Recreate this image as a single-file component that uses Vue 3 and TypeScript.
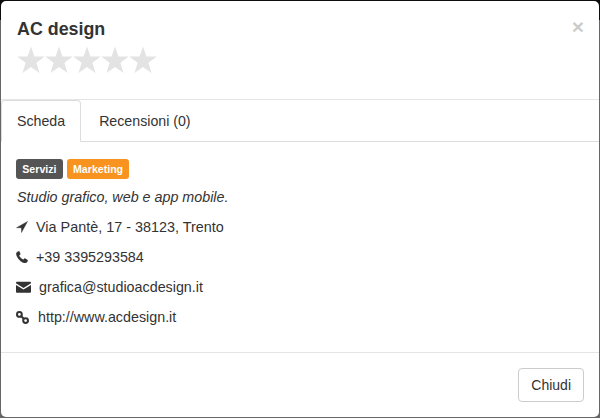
<script setup lang="ts">
const stars: number[] = [1, 2, 3, 4, 5]
</script>

<template>
  <div class="modal-content">
    <div class="modal-header">
      <span class="close">×</span>
      <h4 class="modal-title">AC design</h4>
      <div class="stars">
        <svg v-for="s in stars" :key="s" class="star" viewBox="0 0 28 28" width="28" height="28">
          <path d="M14 .6l3.400 9.900h10.400l-8.400 6.300 3.100 10.300L14 20.900l-8.500 6.200 3.100-10.300L.2 10.500h10.400z" />
        </svg>
      </div>
    </div>

    <ul class="tabs">
      <li class="tab active">Scheda</li>
      <li class="tab">Recensioni (0)</li>
    </ul>

    <div class="modal-body">
      <div class="labels">
        <span class="label dark">Servizi</span>
        <span class="label orange">Marketing</span>
      </div>
      <p class="desc">Studio grafico, web e app mobile.</p>
      <div class="row">
        <svg class="icon solid" viewBox="0 0 12 12" width="12" height="12">
          <path d="M11.500.5L.5 6.700l4.900.1.100 4.700z" />
        </svg>
        <span class="gap-a addr">Via Pantè, 17 - 38123, Trento</span>
      </div>
      <div class="row">
        <svg class="icon solid" viewBox="0 0 12 12" width="12" height="12">
          <path d="M2.600.3L.8 1.500C.2 2 .1 3 .5 4.100c.7 2.100 2 3.800 3.500 5.300 1.600 1.400 3.300 2.500 4.900 2.500.9 0 1.700-.3 2.100-.9l.7-1.300c.1-.3 0-.5-.2-.7L9 7.600c-.3-.1-.5-.1-.7.1l-1 1.100c-.9-.3-1.800-1-2.600-1.800C3.900 6.200 3.300 5.300 3 4.500l1.100-1c.2-.2.200-.4.100-.7L3.300.5C3.100.2 2.900.1 2.600.3z" />
        </svg>
        <span class="gap-a">+39 3395293584</span>
      </div>
      <div class="row">
        <svg class="icon wide" viewBox="0 0 15 12" width="15" height="12">
          <path d="M1.200.7h12.600c.7 0 1.200.5 1.200 1.100v.5L7.500 7 0 2.300v-.5C0 1.200.5.700 1.200.7z" />
          <path d="M0 3.900l7.500 4.700L15 3.900v6.800c0 .6-.5 1.100-1.200 1.100H1.200C.5 11.800 0 11.300 0 10.700z" />
        </svg>
        <span class="gap-b">grafica@studioacdesign.it</span>
      </div>
      <div class="row">
        <svg class="icon link" viewBox="0 0 13 13" width="13" height="13">
          <circle cx="3.400" cy="3.400" r="2.400" />
          <circle cx="9.600" cy="9.600" r="2.400" />
          <path d="M4.800 4.800l3.400 3.400" />
        </svg>
        <span class="gap-c">http://www.acdesign.it</span>
      </div>
    </div>

    <div class="modal-footer">
      <button class="btn" type="button">Chiudi</button>
    </div>
  </div>
</template>

<style>
html,
body {
  margin: 0;
  height: 100%;
  background: linear-gradient(#0c0c0c 20px, #666 20px);
}
</style>

<style scoped>
.modal-content {
  box-sizing: border-box;
  width: 600px;
  height: 418px;
  display: flex;
  flex-direction: column;
  background: #fff;
  background-clip: padding-box;
  border: 1px solid transparent;
  border-radius: 6px;
  font-family: "Liberation Sans", Arial, sans-serif;
  font-size: 14.3px;
  line-height: 20px;
  color: #333;
  overflow: hidden;
}

.modal-header {
  position: relative;
  height: 99px;
  box-sizing: border-box;
  padding: 15px 15px 15px 16px;
  border-bottom: 1px solid #e5e5e5;
}

.close {
  position: absolute;
  top: 15px;
  right: 15px;
  font-size: 21px;
  font-weight: 700;
  line-height: 21px;
  color: #000;
  opacity: 0.2;
}

.modal-title {
  margin: 0;
  font-size: 17.85px;
  font-weight: 700;
  line-height: 26px;
}

.stars {
  display: flex;
  margin-top: 4px;
}

.star {
  fill: #e3e3e3;
}

.tabs {
  display: flex;
  height: 42px;
  box-sizing: border-box;
  margin: 0;
  padding: 0;
  list-style: none;
  border-bottom: 1px solid #ddd;
  font-size: 14.2px;
}

.tab {
  height: 42px;
  box-sizing: border-box;
  padding: 10px 15px;
  margin-right: 2px;
  border: 1px solid transparent;
  border-radius: 4px 4px 0 0;
}

.tab.active {
  background: #fff;
  border-color: #ddd #ddd #fff;
}

.modal-body {
  flex: 1;
  padding: 17px 15px 0 16px;
}

.labels {
  display: flex;
  gap: 4px;
  height: 20px;
  margin-left: -1px;
}

.label {
  padding: 0 6.300px;
  border-radius: 3px;
  font-size: 10.600px;
  font-weight: 700;
  line-height: 20px;
  color: #fff;
}

.dark {
  background: #555;
}

.orange {
  background: #f7931e;
}

.desc {
  margin: 8px 0 0;
  font-style: italic;
}

.row {
  display: flex;
  align-items: center;
  height: 20px;
  margin-top: 10px;
  margin-left: -1px;
}

.icon {
  flex: none;
  fill: #333;
}

.icon.solid {
  stroke: #333;
  stroke-width: 0.4;
}

.icon.link {
  fill: none;
  stroke: #333;
  stroke-width: 2;
}

.addr {
  font-size: 14.4px;
}

.gap-a {
  margin-left: 8px;
}

.gap-b {
  margin-left: 8px;
}

.gap-c {
  margin-left: 9px;
}

.modal-footer {
  display: flex;
  justify-content: flex-end;
  height: 65px;
  box-sizing: border-box;
  padding: 15px;
  border-top: 1px solid #e5e5e5;
}

.btn {
  height: 34px;
  padding: 6px 12px;
  background: #fff;
  border: 1px solid #ccc;
  border-radius: 4px;
  font-family: inherit;
  font-size: 14px;
  line-height: 20px;
  color: #333;
}
</style>
